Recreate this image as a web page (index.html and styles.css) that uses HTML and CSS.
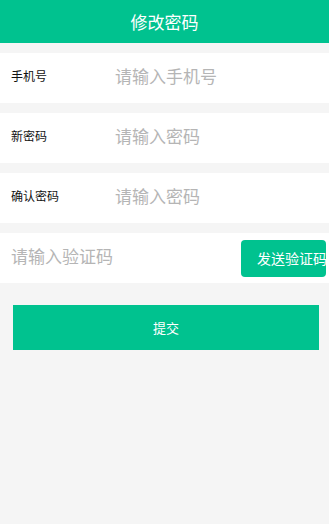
FILE: index.html
```html
<!DOCTYPE html>
<html lang="zh">
<head>
<meta charset="utf-8">
<title>修改密码</title>
<link rel="stylesheet" href="styles.css">
</head>
<body>
<header class="header">修改密码</header>
<main class="form">
  <div class="row">
    <span class="label">手机号</span>
    <input class="input" type="text" placeholder="请输入手机号">
  </div>
  <div class="row">
    <span class="label">新密码</span>
    <input class="input" type="password" placeholder="请输入密码">
  </div>
  <div class="row">
    <span class="label">确认密码</span>
    <input class="input" type="password" placeholder="请输入密码">
  </div>
  <div class="row code-row">
    <input class="input code-input" type="text" placeholder="请输入验证码">
    <button class="send-btn" type="button"><span>发送验证码</span></button>
  </div>
  <button class="submit" type="button">提交</button>
</main>
</body>
</html>
```
FILE: styles.css
```css
* { box-sizing: border-box; }
html, body {
  margin: 0;
  padding: 0;
  background: #f5f5f5;
  font-family: "Noto Sans CJK SC", "Liberation Sans", sans-serif;
}
.header {
  height: 43px;
  background: #00c28f;
  color: #fff;
  font-size: 17px;
  display: flex;
  align-items: center;
  justify-content: center;
}
.form {
  display: flex;
  flex-direction: column;
  padding-top: 10px;
}
.row {
  height: 50px;
  background: #fff;
  display: flex;
  align-items: center;
  margin-bottom: 10px;
  padding-left: 11px;
}
.label {
  width: 104px;
  font-size: 12px;
  color: #111;
  flex: none;
  position: relative;
  top: -3px;
}
.input {
  flex: 1;
  min-width: 0;
  border: none;
  outline: none;
  background: transparent;
  font-family: inherit;
  font-size: 17px;
  color: #333;
  padding: 0;
  position: relative;
  top: -3px;
}
.input::placeholder { color: #b5b5b5; }
.code-row { padding-right: 3px; }
.send-btn {
  flex: none;
  width: 85px;
  height: 37px;
  border: none;
  border-radius: 4px;
  background: #00c28f;
  color: #fff;
  font-family: inherit;
  font-size: 14px;
  padding: 0 0 0 16px;
  text-align: left;
  white-space: nowrap;
  overflow: hidden;
  display: flex;
  align-items: center;
}
.submit {
  margin: 12px 10px 0 13px;
  height: 45px;
  border: none;
  background: #00c28f;
  color: #fff;
  font-family: inherit;
  font-size: 13px;
}
```
